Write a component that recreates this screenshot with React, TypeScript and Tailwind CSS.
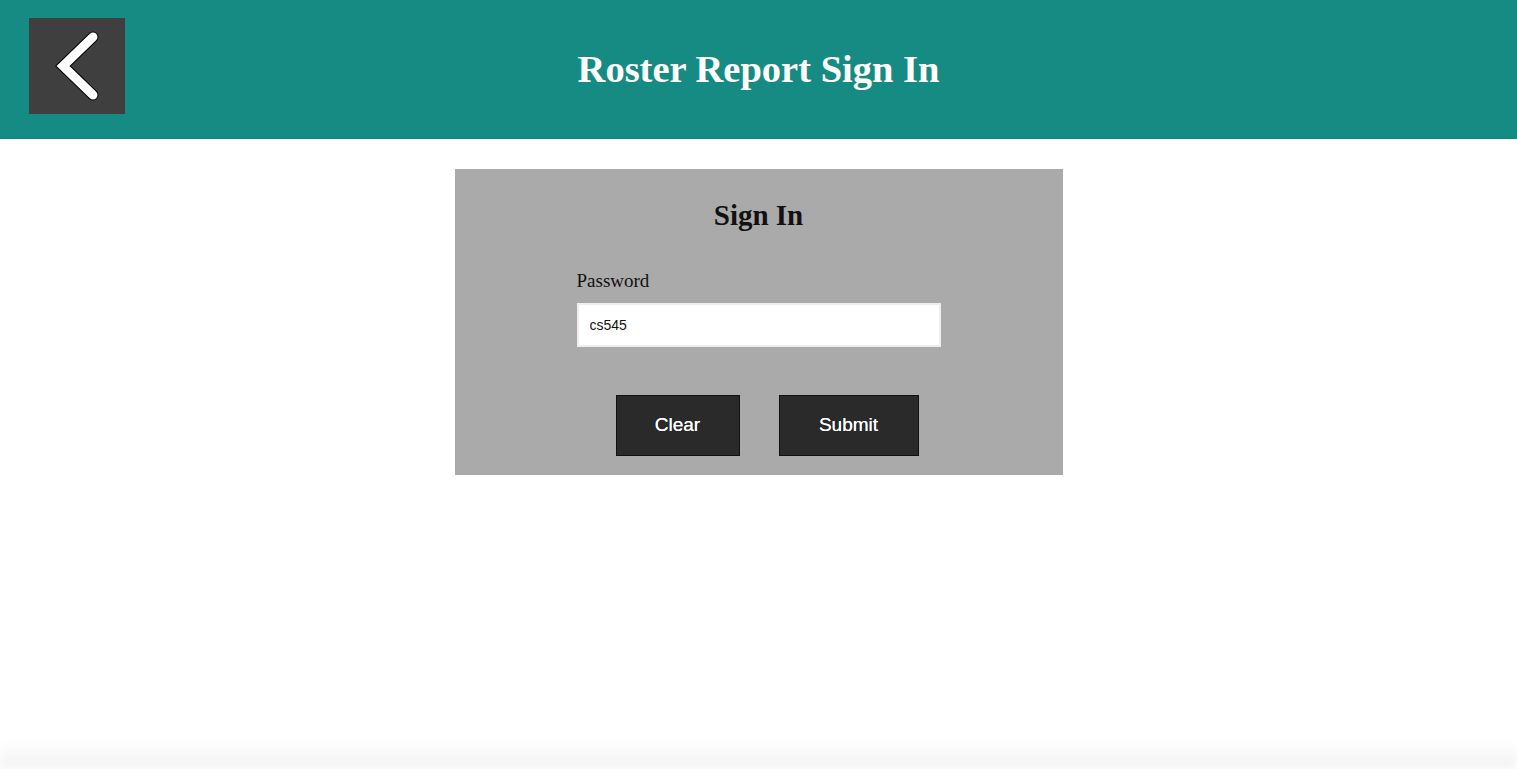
export default function App() {
  return (
    <div className="relative min-h-[769px] bg-white font-['Liberation_Serif',serif]">
      <header className="grid h-[139px] grid-cols-[1fr_auto_1fr] items-center border-b border-[#12857d] bg-[#168b83]">
        <div className="self-start pl-[29px] pt-[18px]">
          <button className="flex h-[96px] w-[96px] items-center justify-center bg-[#3f3f3f]">
            <svg width="96" height="96" viewBox="0 0 96 96">
              <polyline
                points="64,19 34,48 64,77"
                fill="none"
                stroke="#000"
                strokeWidth="11"
                strokeLinecap="round"
                strokeLinejoin="miter"
              />
              <polyline
                points="64,19 34,48 64,77"
                fill="none"
                stroke="#fff"
                strokeWidth="9"
                strokeLinecap="round"
                strokeLinejoin="miter"
              />
            </svg>
          </button>
        </div>
        <h1 className="text-[38.5px] font-bold leading-none text-white">Roster Report Sign In</h1>
        <div />
      </header>

      <main className="flex justify-center pt-[30px]">
        <div className="w-[608px] bg-[#aaaaaa] pb-[19px] pt-[28px]">
          <h2 className="text-center text-[29px] font-bold leading-[36px] text-[#111]">Sign In</h2>
          <div className="mx-auto mt-[37px] w-[364px]">
            <label className="block text-[19px] leading-[22px] text-[#111]">Password</label>
            <input
              type="text"
              defaultValue="cs545"
              className="mt-[11px] block h-[44px] w-[364px] border-2 border-[#eeeeee] bg-white px-[11px] font-['Liberation_Sans',sans-serif] text-[14px] text-[#111] outline-none"
            />
          </div>
          <div className="mt-[48px] flex gap-[39px] pl-[161px] font-['Liberation_Sans',sans-serif]">
            <button className="h-[61px] w-[124px] border border-[#111] bg-[#2a2a2a] text-[19px] text-white [text-shadow:0_0_0.6px_#fff]">
              Clear
            </button>
            <button className="h-[61px] w-[140px] border border-[#111] bg-[#2a2a2a] text-[19px] text-white [text-shadow:0_0_0.6px_#fff]">
              Submit
            </button>
          </div>
        </div>
      </main>

      <div className="pointer-events-none fixed inset-x-0 bottom-0 h-[28px] bg-gradient-to-b from-transparent to-[#f2f2f2] blur-[4px]" />
    </div>
  );
}
